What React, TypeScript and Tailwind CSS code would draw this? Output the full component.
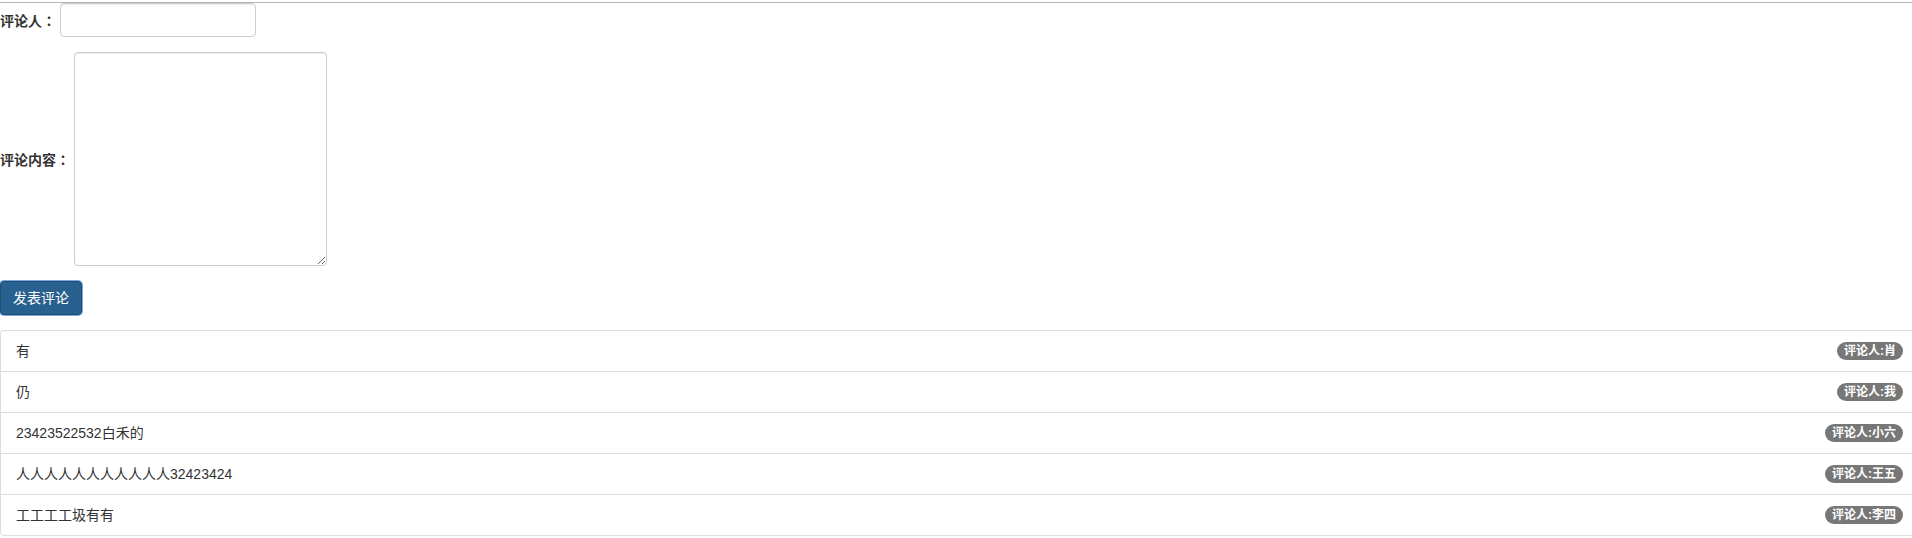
const comments = [
  { content: '有', user: '肖' },
  { content: '仍', user: '我' },
  { content: '23423522532白禾的', user: '小六' },
  { content: '人人人人人人人人人人人32423424', user: '王五' },
  { content: '工工工工圾有有', user: '李四' },
];

const font = "font-['Liberation_Sans','Noto_Sans_CJK_SC',sans-serif]";
const colon = "font-['Noto_Sans_CJK_TC',sans-serif]";

export default function App() {
  return (
    <div className={`${font} text-[14px] leading-[20px] text-[#333] bg-white min-h-[538px]`}>
      <div className="h-[2px]" />
      <div className="border-t border-[#b4b4b4]" />

      {/* 评论人 */}
      <div className="flex items-center h-[34px]">
        <label className="font-bold w-[60px] shrink-0">
          评论人<span className={colon}>：</span>
        </label>
        <input
          type="text"
          className="w-[196px] h-[34px] px-3 border border-[#ccc] rounded-[4px] shadow-[inset_0_1px_1px_rgba(0,0,0,0.075)] outline-none"
        />
      </div>

      {/* 评论内容 */}
      <div className="flex items-center mt-[15px]">
        <label className="font-bold w-[74px] shrink-0">
          评论内容<span className={colon}>：</span>
        </label>
        <textarea className="w-[253px] h-[214px] px-3 py-[6px] border border-[#ccc] rounded-[4px] shadow-[inset_0_1px_1px_rgba(0,0,0,0.075)] outline-none" />
      </div>

      <button className="mt-[15px] h-[34px] px-3 text-white bg-[#28608f] border border-[#204d74] rounded-[4px] ring-1 ring-[#80a9e0]">
        发表评论
      </button>

      <ul className="mt-[15px] border-l border-t border-[#ddd] rounded-l-[4px]">
        {comments.map((c) => (
          <li
            key={c.user}
            className="flex items-center justify-between h-[41px] pl-[15px] pr-[9px] border-b border-[#ddd] last:rounded-bl-[4px]"
          >
            <span>{c.content}</span>
            <span className="bg-[#777] text-white font-bold text-[12px] leading-none px-[7px] py-[3px] rounded-[10px]">
              评论人:{c.user}
            </span>
          </li>
        ))}
      </ul>
    </div>
  );
}
